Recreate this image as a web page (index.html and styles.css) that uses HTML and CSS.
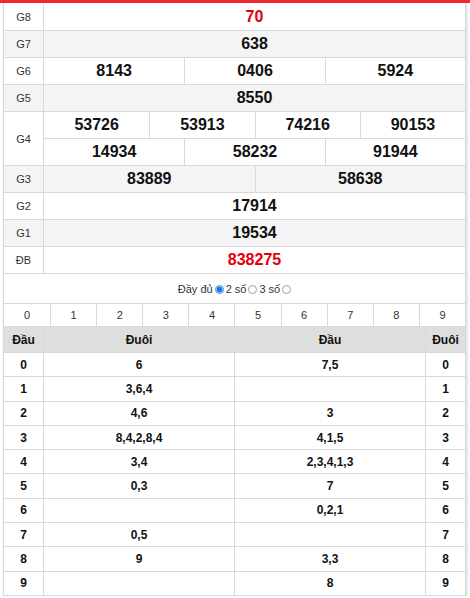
FILE: index.html
```html
<!DOCTYPE html>
<html lang="vi">
<head>
<meta charset="utf-8">
<title>Kết quả xổ số</title>
<link rel="stylesheet" href="styles.css">
</head>
<body>
<div class="topbar"></div>
<div class="wrap">
  <div class="prizes">
    <div class="prow"><div class="plabel">G8</div><div class="pvals c1"><div class="pv red">70</div></div></div>
    <div class="prow alt"><div class="plabel">G7</div><div class="pvals c1"><div class="pv">638</div></div></div>
    <div class="prow"><div class="plabel">G6</div><div class="pvals c3"><div class="pv">8143</div><div class="pv">0406</div><div class="pv">5924</div></div></div>
    <div class="prow alt"><div class="plabel">G5</div><div class="pvals c1"><div class="pv">8550</div></div></div>
    <div class="prow g4"><div class="plabel">G4</div>
      <div class="pstack">
        <div class="pvals c4 sub"><div class="pv">53726</div><div class="pv">53913</div><div class="pv">74216</div><div class="pv">90153</div></div>
        <div class="pvals c3"><div class="pv">14934</div><div class="pv">58232</div><div class="pv">91944</div></div>
      </div>
    </div>
    <div class="prow alt"><div class="plabel">G3</div><div class="pvals c2"><div class="pv">83889</div><div class="pv">58638</div></div></div>
    <div class="prow"><div class="plabel">G2</div><div class="pvals c1"><div class="pv">17914</div></div></div>
    <div class="prow alt"><div class="plabel">G1</div><div class="pvals c1"><div class="pv">19534</div></div></div>
    <div class="prow"><div class="plabel">ĐB</div><div class="pvals c1"><div class="pv red">838275</div></div></div>
  </div>
  <div class="opts">
    <label class="opt">Đầy đủ<input type="radio" name="mode" class="rad" checked></label>
    <label class="opt">2 số<input type="radio" name="mode" class="rad"></label>
    <label class="opt">3 số<input type="radio" name="mode" class="rad"></label>
  </div>
  <div class="digits">
    <div class="dg">0</div><div class="dg">1</div><div class="dg">2</div><div class="dg">3</div><div class="dg">4</div><div class="dg">5</div><div class="dg">6</div><div class="dg">7</div><div class="dg">8</div><div class="dg">9</div>
  </div>
  <div class="lrow lhead"><div class="lc">Đầu</div><div class="lc">Đuôi</div><div class="lc">Đầu</div><div class="lc">Đuôi</div></div>
  <div class="lrow"><div class="lc">0</div><div class="lc">6</div><div class="lc">7,5</div><div class="lc">0</div></div>
  <div class="lrow"><div class="lc">1</div><div class="lc">3,6,4</div><div class="lc"></div><div class="lc">1</div></div>
  <div class="lrow"><div class="lc">2</div><div class="lc">4,6</div><div class="lc">3</div><div class="lc">2</div></div>
  <div class="lrow"><div class="lc">3</div><div class="lc">8,4,2,8,4</div><div class="lc">4,1,5</div><div class="lc">3</div></div>
  <div class="lrow"><div class="lc">4</div><div class="lc">3,4</div><div class="lc">2,3,4,1,3</div><div class="lc">4</div></div>
  <div class="lrow"><div class="lc">5</div><div class="lc">0,3</div><div class="lc">7</div><div class="lc">5</div></div>
  <div class="lrow"><div class="lc">6</div><div class="lc"></div><div class="lc">0,2,1</div><div class="lc">6</div></div>
  <div class="lrow"><div class="lc">7</div><div class="lc">0,5</div><div class="lc"></div><div class="lc">7</div></div>
  <div class="lrow"><div class="lc">8</div><div class="lc">9</div><div class="lc">3,3</div><div class="lc">8</div></div>
  <div class="lrow"><div class="lc">9</div><div class="lc"></div><div class="lc">8</div><div class="lc">9</div></div>
</div>
</body>
</html>
```
FILE: styles.css
```css
* { box-sizing: border-box; }
html, body { margin: 0; padding: 0; background: #fff; }
body {
  font-family: "Liberation Sans", Arial, sans-serif;
  color: #222;
  width: 470px;
}
.topbar { height: 3px; background: #ef2a2f; }
.wrap {
  margin: 0 4px 0 3px;
  border-left: 1px solid #d9d9d9;
  border-right: 1px solid #d9d9d9;
  border-bottom: 1px solid #d9d9d9;
  box-shadow: 1px 1px 3px rgba(0, 0, 0, 0.18);
  background: #fff;
}
.prizes { padding-top: 1px; }
.prow {
  display: grid;
  grid-template-columns: 39px 1fr;
  height: 27px;
  border-bottom: 1px solid #d9d9d9;
}
.prow.alt { background: #f4f4f4; }
.prow.g4 { height: 54px; }
.plabel {
  display: flex;
  align-items: center;
  justify-content: center;
  font-size: 11px;
  color: #333;
}
.pvals {
  display: grid;
  border-left: 1px solid #d9d9d9;
  height: 100%;
}
.pvals.c1 { grid-template-columns: 1fr; }
.pvals.c2 { grid-template-columns: repeat(2, 1fr); }
.pvals.c3 { grid-template-columns: repeat(3, 1fr); }
.pvals.c4 { grid-template-columns: repeat(4, 1fr); }
.pstack { display: grid; grid-template-rows: 27px 26px; }
.pstack .pvals.sub { border-bottom: 1px solid #d9d9d9; }
.pv {
  display: flex;
  align-items: center;
  justify-content: center;
  font-size: 16px;
  font-weight: bold;
  color: #111;
}
.pv + .pv { border-left: 1px solid #d9d9d9; }
.pv.red { color: #e3000b; }
.opts {
  height: 29px;
  display: flex;
  align-items: center;
  justify-content: center;
  gap: 2px;
  font-size: 11px;
  color: #333;
  padding-top: 1px;
}
.opt { display: flex; align-items: center; gap: 2px; }
.rad {
  appearance: none;
  -webkit-appearance: none;
  margin: 0;
  width: 9px;
  height: 9px;
  border: 1px solid #a0a0a0;
  border-radius: 50%;
  background: #fff;
}
.rad:checked {
  border-color: #3b8ee8;
  background: radial-gradient(circle, #1e78e0 0 2.6px, #8fc0f3 3px, #fff 3.6px);
}
.digits {
  display: grid;
  grid-template-columns: repeat(10, 1fr);
  height: 24px;
  border-top: 1px solid #d9d9d9;
  border-bottom: 1px solid #d9d9d9;
}
.dg {
  display: flex;
  align-items: center;
  justify-content: center;
  font-size: 11px;
  color: #333;
}
.dg + .dg { border-left: 1px solid #d9d9d9; }
.lrow {
  display: grid;
  grid-template-columns: 39px 1fr 1fr 40px;
  height: 24.3px;
  border-bottom: 1px solid #d9d9d9;
}
.lrow:last-child { border-bottom: none; height: 23.3px; }
.lrow.lhead { height: 26px; background: #dedede; }
.lc {
  display: flex;
  align-items: center;
  justify-content: center;
  font-size: 12px;
  font-weight: bold;
  color: #111;
}
.lhead .lc { font-size: 12px; }
.lc + .lc { border-left: 1px solid #d9d9d9; }
```
